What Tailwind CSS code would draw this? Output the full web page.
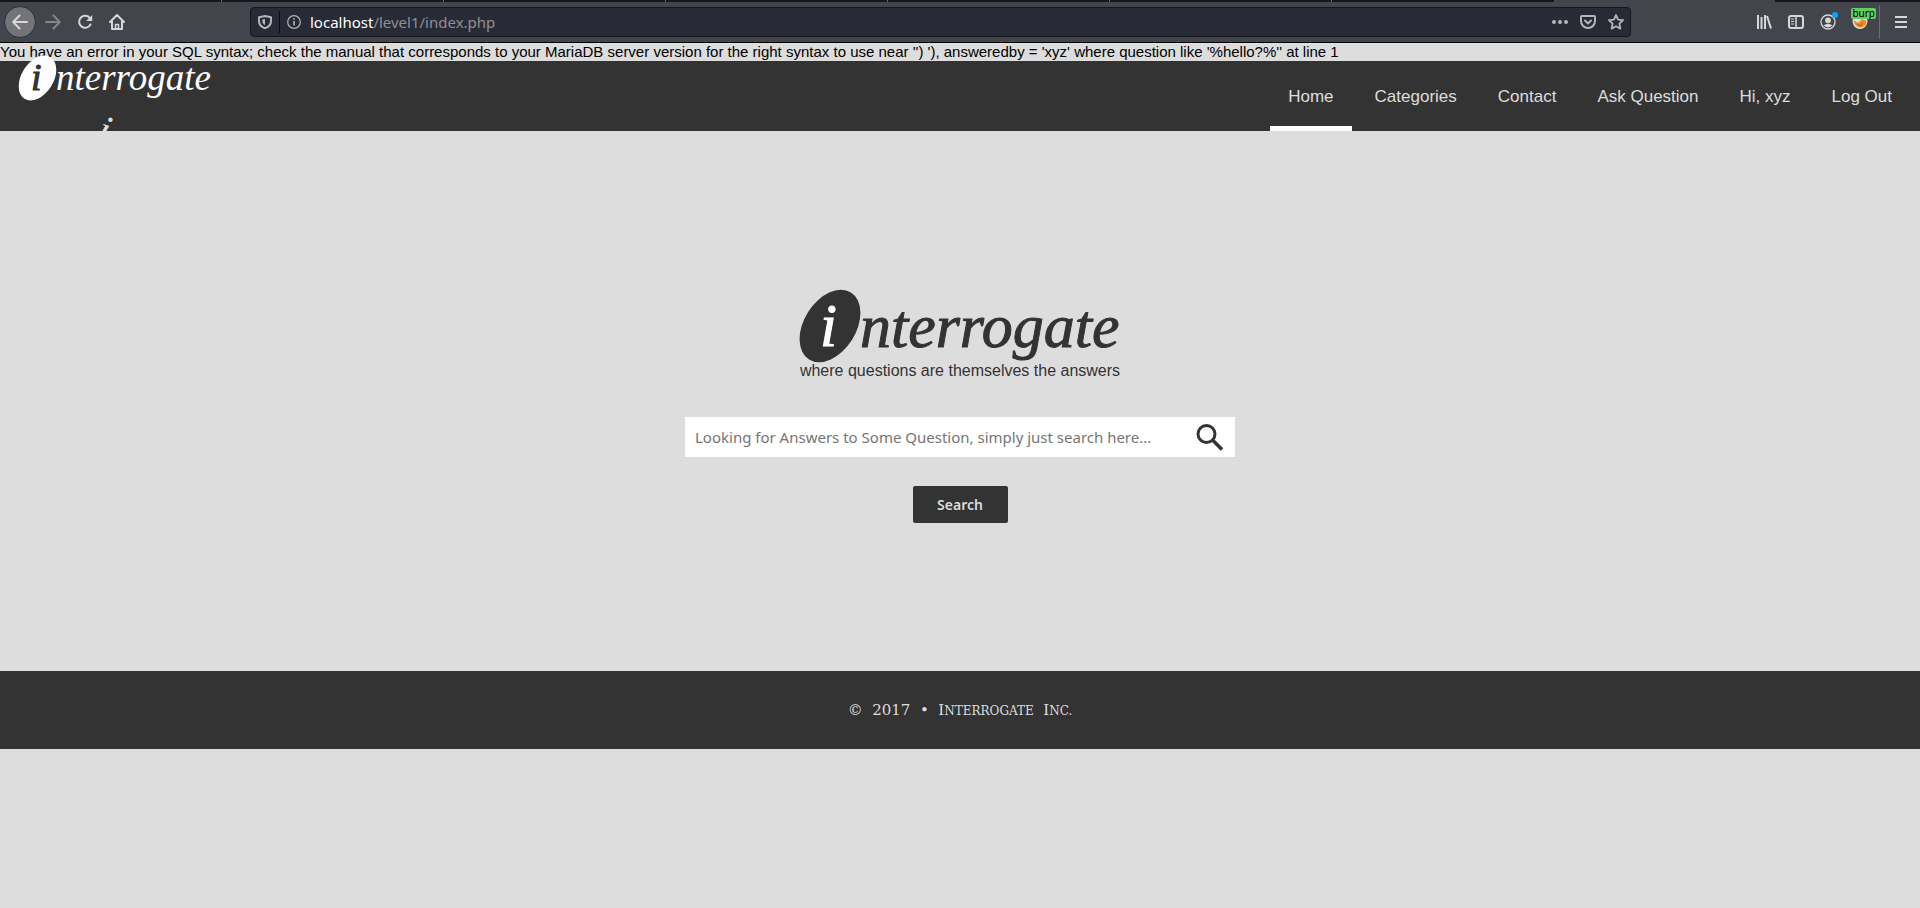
<!DOCTYPE html>
<html lang="en">
<head>
<meta charset="utf-8">
<title>Interrogate</title>
<script src="https://cdn.jsdelivr.net/npm/@tailwindcss/browser@4"></script>
</head>
<body class="min-h-screen bg-[#ddd] font-['Liberation_Sans',Arial,sans-serif] text-[#333]">

<!-- Browser toolbar -->
<div class="h-[43px] bg-[#42454c] border-b border-black flex flex-col font-['Noto_Sans',sans-serif]">
  <div class="flex h-[2px] shrink-0 bg-[#15161b]">
    <div class="w-[222px] border-r border-[#66686e]"></div>
    <div class="w-[222px] border-r border-[#66686e]"></div>
    <div class="w-[222px] border-r border-[#66686e]"></div>
    <div class="w-[222px] border-r border-[#66686e]"></div>
    <div class="w-[222px] border-r border-[#66686e]"></div>
    <div class="w-[222px] border-r border-[#66686e]"></div>
    <div class="w-[222px]"></div>
    <div class="w-[221px] bg-[#42454c]"></div>
  </div>
  <div class="flex flex-1 items-center pl-1 pr-[11px] text-[#d7d7d7]">
    <button aria-label="Back" class="flex size-8 items-center justify-center rounded-full border border-[#2c2e33] bg-[#737478]">
      <svg class="size-4" viewBox="0 0 16 16" fill="none" stroke="currentColor" stroke-width="2" stroke-linecap="round" stroke-linejoin="round"><path d="M15 8H1.500M7.500 1.500 1.200 8l6.300 6.500"/></svg>
    </button>
    <button aria-label="Forward" class="ml-[9px] text-[#85868a]">
      <svg class="size-4" viewBox="0 0 16 16" fill="none" stroke="currentColor" stroke-width="2" stroke-linecap="round" stroke-linejoin="round"><path d="M1 8h13.500M8.500 1.500 14.800 8l-6.300 6.500"/></svg>
    </button>
    <button aria-label="Reload" class="ml-4">
      <svg class="size-4" viewBox="0 0 16 16" fill="none" stroke="currentColor" stroke-width="2" stroke-linecap="round"><path d="M13.500 10.500A6 6 0 1 1 13 4.300"/><path d="M15.200 1v6H9.200z" fill="currentColor" stroke="none"/></svg>
    </button>
    <button aria-label="Home" class="ml-4">
      <svg class="size-4" viewBox="0 0 16 16" fill="none" stroke="currentColor" stroke-width="2" stroke-linejoin="round" stroke-linecap="round"><path d="M1 8 8 1l7 7M3 7v8h10V7"/><path d="M6.500 15v-4.500h3V15" stroke-width="1.500"/></svg>
    </button>
    <div class="ml-[125px] mr-[125px] flex h-[30px] flex-1 items-center rounded border border-[#15161b] bg-[#282a36] text-[#b5b6ba]">
      <svg class="ml-[7px] size-[14px]" viewBox="0 0 14 14" fill="none" stroke="currentColor" stroke-width="2"><path d="M7 1 13 2.300V6c0 3.500-2.500 6-6 7.200C3.500 12 1 9.500 1 6V2.300z" stroke-linejoin="round"/><path d="M7 4v6C5 9 4.300 7.800 4.300 6V4.500z" fill="currentColor" stroke="none"/></svg>
      <span class="ml-[7px] h-[22px] w-px bg-[#0c0c0d]"></span>
      <svg class="ml-[7px] size-[14px]" viewBox="0 0 14 14" fill="none" stroke="currentColor" stroke-width="1.200"><circle cx="7" cy="7" r="6.300"/><path d="M7 6v4.500M7 3.200v1.600" stroke-width="1.600"/></svg>
      <input aria-label="Address" class="sr-only" value="localhost/level1/index.php">
      <span class="ml-[9px] flex-1 text-[15px] text-[#8f9096]"><span class="text-white">localhost</span>/level1/index.php</span>
      <svg class="h-4 w-4" viewBox="0 0 16 16" fill="currentColor"><circle cx="2" cy="8" r="2"/><circle cx="8" cy="8" r="2"/><circle cx="14" cy="8" r="2"/></svg>
      <svg class="ml-3 size-4" viewBox="0 0 16 16" fill="none" stroke="currentColor" stroke-width="2" stroke-linecap="round" stroke-linejoin="round"><path d="M2 2h12q1 0 1 1v4a7 7 0 0 1-14 0V3q0-1 1-1z"/><path d="m5 6.500 3 3 3-3"/></svg>
      <svg class="ml-3 mr-[6px] size-4" viewBox="0 0 16 16" fill="none" stroke="currentColor" stroke-width="1.800" stroke-linejoin="round"><path d="m8 1 2.100 4.600 5 .6-3.700 3.400 1 5L8 12.200l-4.400 2.400 1-5L.9 6.200l5-.6z"/></svg>
    </div>
    <button aria-label="Library"><svg class="size-4" viewBox="0 0 16 16" fill="none" stroke="currentColor" stroke-width="2"><path d="M2 1v14M5.500 3v12M9 1v14" /><path d="m11 2 4 12.500"/></svg></button>
    <button aria-label="Sidebars" class="ml-4"><svg class="size-4" viewBox="0 0 16 16" fill="none" stroke="currentColor" stroke-width="2"><rect x="1" y="2" width="14" height="12" rx="2"/><path d="M8 2v12" stroke-width="1.500"/><path d="M3 5h3M3 7.500h3M3 10h3" stroke-width="1"/></svg></button>
    <button aria-label="Account" class="relative ml-4"><svg class="size-4" viewBox="0 0 16 16" fill="currentColor"><circle cx="8" cy="8" r="7" fill="none" stroke="currentColor" stroke-width="1.300"/><circle cx="8" cy="6.300" r="2.900"/><path d="M3.500 11.500Q8 8 12.500 11.500 8 15.500 3.500 11.500"/></svg><span class="absolute -top-[2px] left-3 size-[6px] rounded-full bg-[#00a8ff]"></span></button>
    <button aria-label="Proxy: burp" class="relative ml-4"><svg class="size-4" viewBox="0 0 16 16"><circle cx="8" cy="7.500" r="7.500" fill="#e8ddd0"/><path d="M1.500 6 6 9l4-4 4.500 2q0 6-6.500 6.500Q2.500 12.500 1.500 6z" fill="#f08a24"/><path d="m5 10 3 2 3-3" stroke="#a85612" fill="none"/></svg><span class="absolute -top-[6px] right-[-8px] h-[11px] rounded-[2px] bg-[#62cc62] px-px text-[10px] leading-[10px] text-black">burp</span></button>
    <span class="ml-[11px] h-[34px] w-px bg-[#6b6d72]"></span>
    <button aria-label="Menu" class="ml-[13px]"><svg class="size-4" viewBox="0 0 16 16" stroke="currentColor" stroke-width="2"><path d="M2 3h12M2 8h12M2 13h12"/></svg></button>
  </div>
</div>

<p class="h-[18px] text-[15px] leading-[18px] text-black">You have an error in your SQL syntax; check the manual that corresponds to your MariaDB server version for the right syntax to use near '') '), answeredby = 'xyz' where question like '%hello?%'' at line 1</p>

<header class="flex h-[70px] justify-between bg-[#333] pl-[18px] pr-[10px]">
  <a href="#" aria-label="interrogate" class="relative block w-[200px] text-white">
    <svg class="absolute -top-[6px] left-0 h-[76px] w-[200px]" viewBox="0 0 200 76" font-family="'Liberation Serif',serif" font-style="italic">
      <ellipse cx="19.500" cy="23" rx="16" ry="24.500" transform="rotate(32 19.500 23)" fill="#fff"/>
      <text x="13" y="35" font-size="38" fill="#333" stroke="#333" stroke-width="1">i</text>
      <text x="38" y="35" font-size="37" fill="#fff">nterrogate</text>
      <text x="76" y="86" font-size="42" fill="#ddd" transform="rotate(20 76 86)">i</text>
    </svg>
  </a>
  <nav class="flex gap-[5px] text-[17px] text-[#ddd]">
    <a href="#" class="flex items-center border-b-[5px] border-white px-[18px] pt-[7px]">Home</a>
    <a href="#" class="flex items-center px-[18px] pt-[2px]">Categories</a>
    <a href="#" class="flex items-center px-[18px] pt-[2px]">Contact</a>
    <a href="#" class="flex items-center px-[18px] pt-[2px]">Ask Question</a>
    <a href="#" class="flex items-center px-[18px] pt-[2px]">Hi, xyz</a>
    <a href="#" class="flex items-center px-[18px] pt-[2px]">Log Out</a>
  </nav>
</header>

<main class="flex h-[540px] flex-col items-center pt-[158px]">
  <h1 aria-label="interrogate" class="h-[72px]">
    <svg class="h-[76px] w-[322px]" viewBox="0 0 322 76" font-family="'Liberation Serif',serif" font-style="italic">
      <ellipse cx="31" cy="37" rx="26" ry="39.500" transform="rotate(32 31 37)" fill="#333"/>
      <text x="21" y="57" font-size="61" fill="#fff" stroke="#fff" stroke-width="1">i</text>
      <text x="61" y="58" font-size="62" fill="#333" stroke="#333" stroke-width="1">nterrogate</text>
    </svg>
  </h1>
  <p class="text-[16px] leading-[20px]">where questions are themselves the answers</p>
  <form class="mt-9 flex flex-col items-center font-['Noto_Sans',sans-serif]" onsubmit="return false">
    <label class="flex h-10 w-[550px] items-center bg-white pl-[10px] pr-[11px]">
      <input type="text" aria-label="Search question" placeholder="Looking for Answers to Some Question, simply just search here..." class="min-w-0 flex-1 text-[15px] outline-none placeholder:text-[#757575]">
      <svg class="size-7" viewBox="0 0 28 28" fill="none" stroke="#333" stroke-width="3"><circle cx="10.500" cy="11" r="8.500"/><path d="m17 17.500 9 9" stroke-width="3.500"/></svg>
    </label>
    <button class="mt-[29px] h-[37px] w-[95px] rounded-[2px] bg-[#333] text-[14px] font-semibold text-[#ddd]">Search</button>
  </form>
</main>

<footer class="flex h-[78px] items-center justify-center bg-[#333] font-['DejaVu_Serif',serif] text-[15px] text-[#ddd]">
  <p class="whitespace-pre">©  2017  •  I<span class="text-[12px] uppercase">nterrogate</span>  I<span class="text-[12px] uppercase">nc.</span></p>
</footer>
</body>
</html>
